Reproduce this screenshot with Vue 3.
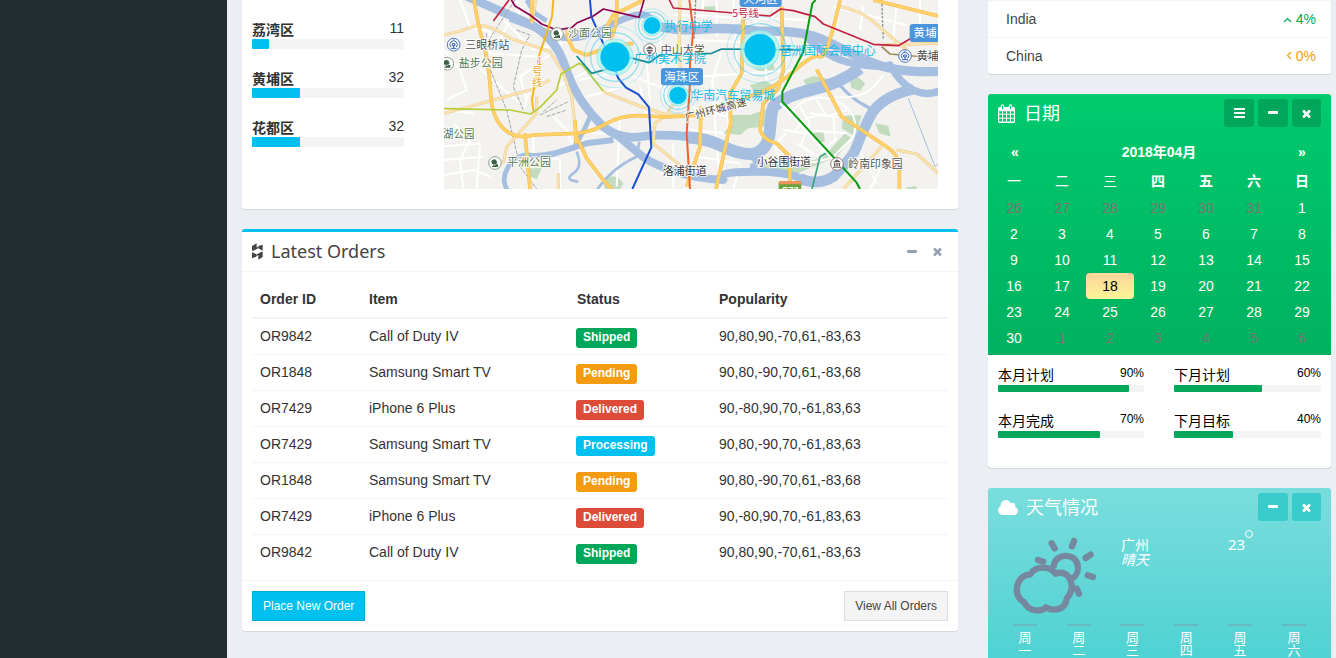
<script setup>
const districts = [
  { name: '荔湾区', value: 11, width: 11 },
  { name: '黄埔区', value: 32, width: 31.6 },
  { name: '花都区', value: 32, width: 31.6 },
]

const orders = [
  { id: 'OR9842', item: 'Call of Duty IV', status: 'Shipped', pop: '90,80,90,-70,61,-83,63' },
  { id: 'OR1848', item: 'Samsung Smart TV', status: 'Pending', pop: '90,80,-90,70,61,-83,68' },
  { id: 'OR7429', item: 'iPhone 6 Plus', status: 'Delivered', pop: '90,-80,90,70,-61,83,63' },
  { id: 'OR7429', item: 'Samsung Smart TV', status: 'Processing', pop: '90,80,-90,70,-61,83,63' },
  { id: 'OR1848', item: 'Samsung Smart TV', status: 'Pending', pop: '90,80,-90,70,61,-83,68' },
  { id: 'OR7429', item: 'iPhone 6 Plus', status: 'Delivered', pop: '90,-80,90,70,-61,83,63' },
  { id: 'OR9842', item: 'Call of Duty IV', status: 'Shipped', pop: '90,80,90,-70,61,-83,63' },
]

const weekdays = ['一', '二', '三', '四', '五', '六', '日']
const days = Array.from({ length: 42 }, (_, i) => {
  if (i < 6) return { n: 26 + i, muted: true }
  if (i > 35) return { n: i - 35, muted: true }
  return { n: i - 5, today: i - 5 === 18 }
})

const plans = [
  { name: '本月计划', pct: 90 },
  { name: '下月计划', pct: 60 },
  { name: '本月完成', pct: 70 },
  { name: '下月目标', pct: 40 },
]

const forecast = ['一', '二', '三', '四', '五', '六']

const times = 'M1490 1322q0 40-28 68l-136 136q-28 28-68 28t-68-28l-294-294-294 294q-28 28-68 28t-68-28l-136-136q-28-28-28-68t28-68l294-294-294-294q-28-28-28-68t28-68l136-136q28-28 68-28t68 28l294 294 294-294q28-28 68-28t68 28l136 136q28 28 28 68t-28 68l-294 294 294 294q28 28 28 68z'

/* Line work of the city map */
const water = [
  { w: 26, d: 'M60 -20 Q150 20 215 48 T300 90 Q350 130 370 185 T400 260 Q430 320 480 370 T600 410 T760 412' },
  { w: 36, d: 'M740 412 Q800 415 850 440 T940 462 Q985 450 990 390 T1000 320 Q1040 285 1120 268 T1260 205' },
  { w: 20, d: 'M210 55 Q290 85 350 108 T520 72 T640 78' },
  { w: 28, d: 'M630 72 Q700 95 780 88 T960 94 Q1090 90 1150 120 T1290 185 T1500 214' },
  { w: 22, d: 'M1100 110 Q1160 175 1240 190 T1350 195 Q1380 250 1420 270 T1500 272' },
  { w: 32, d: 'M1420 268 Q1320 290 1290 350 T1250 440 T1180 530 Q1130 560 1080 535' },
  { w: 24, d: 'M1100 545 Q1060 515 940 515 T850 540 Q760 535 690 510 T590 455 L530 405' },
  { w: 14, d: 'M205 575 Q180 540 205 500 T270 465 T400 445 Q430 400 450 350' },
  { w: 8, d: 'M410 455 Q430 500 400 520 T415 545 M470 570 Q520 500 590 470 L598 425' },
  { w: 18, d: 'M330 465 L440 430 L520 420 M940 470 Q960 500 930 500' },
  { w: 10, d: 'M1190 240 Q1220 290 1290 325' },
  { w: 3, d: 'M1405 295 L1485 500 L1496 490' },
  { w: 14, d: 'M260 0 L285 40 L320 62' },
]
const parks = [
  'M985 325 L930 345 860 345 880 370 850 400 900 405 925 385 975 380 Z',
  'M1090 240 L1120 228 1170 238 1155 260 1110 280 Z',
  'M930 255 L975 243 1010 260 990 280 950 290 Z',
  'M1230 245 L1255 232 1275 250 1262 272 1235 265 Z',
  'M1305 370 L1345 378 1352 410 1318 400 Z',
  'M1210 348 L1265 345 1245 410 1205 385 Z',
  'M930 480 L990 515 1060 525 1190 470 1235 415 1215 400 1150 470 1060 500 Z',
  'M265 505 L305 505 290 538 270 530 Z',
  'M490 545 Q520 510 550 550 L540 570 495 570 Z',
  'M1115 400 L1150 395 1155 425 1125 428 Z',
  'M1400 562 L1430 558 1430 570 1400 570 Z',
  'M790 20 L825 18 830 30 795 35 Z M935 200 L1000 190 1005 210 960 215 Z',
]
const streets =
  'M12 150 L60 210 80 270 20 300 M12 330 L100 340 M0 440 L120 430 110 567 M40 370 L90 420 60 480 70 567 M12 480 L130 470 M12 525 L100 510 150 530 M60 0 L90 80 150 95 150 160 L300 170 M170 140 L210 60 M190 60 L280 150 400 120 M230 0 L240 60 M250 330 L300 180 360 150 M100 190 L240 310 M300 190 L240 230 260 300 M340 350 L380 390 400 440 M350 260 L470 200 M410 300 L580 250 M420 240 L540 215 M280 400 L280 460 360 480 360 567 M400 400 L540 400 M540 350 L530 560 M600 260 L620 340 M580 230 L660 260 700 320 M600 160 L760 170 M620 190 L630 300 M660 110 L680 300 M790 0 L785 80 M830 0 L830 110 M845 150 L815 250 840 300 M700 45 L1100 60 M760 120 L1000 130 M770 230 L1060 210 M880 0 L890 200 M970 110 L980 240 M940 0 L950 100 M1180 20 L1400 75 M1200 0 L1190 80 M1270 20 L1260 90 M1440 0 L1440 90 M1370 10 L1360 120 M750 390 L850 400 M860 320 L870 420 M750 320 L860 350 M770 470 L900 490 M820 300 L840 567 M900 500 L880 567 M700 430 L700 567 M1250 430 L1310 550 M1340 470 L1290 567'
const campus =
  'M1020 310 L1170 470 M1050 340 Q1120 260 1210 315 Q1260 350 1240 410 L1180 470 Q1090 510 1010 460 Q1000 430 1040 400 M1060 400 Q1100 330 1180 350 L1185 420 1140 460 M1080 320 L1110 370 1080 440 M1110 340 L1190 350 M1090 390 L1220 400 M1070 430 L1150 480 M1030 390 L1100 400 M1130 300 L1160 350 1220 330 M1185 290 Q1270 300 1310 250 L1330 225'
const minor = [
  'M12 105 Q60 95 100 80 T210 115 L330 155 370 220 395 290 405 370',
  'M12 340 L80 322 160 300 270 270 330 240',
  'M190 490 L200 440 290 340 M490 275 L590 315 680 345 750 345',
  'M720 0 L718 110 722 270 680 345 645 370 640 430 700 480 750 520',
  'M1210 567 L1325 440 M1370 450 L1430 462 1496 520 M1200 20 Q1260 30 1300 65 T1400 150',
  'M355 520 L355 567 M288 0 L275 70 M290 290 L290 345 M1330 135 L1496 130',
]
const major = [
  'M102 0 Q115 80 130 130 T152 280 Q155 350 190 385 T280 405 L410 400 Q460 395 500 370 Q550 342 620 348 T780 345 Q850 325 910 295',
  'M255 400 L262 480 270 567 M405 360 L408 430 M405 400 L440 475 490 540 515 567',
  'M380 105 L400 150 440 165 Q500 140 580 130 M530 0 Q535 80 510 120 M610 0 L520 45 490 100',
  'M275 0 L275 65 M380 90 L390 130',
  'M910 295 Q1000 270 1060 215 T1140 170 T1200 0 M910 50 L905 220 870 280 872 370 828 567',
  'M1025 20 L1030 210 1015 265 970 310 960 390 Q970 420 1010 430 L1050 470 1050 550',
  'M783 320 L780 440 740 560 M1300 0 L1496 48 M1130 208 L1205 350 1340 440 Q1378 465 1378 500 L1378 567',
]
const metro = [
  { c: '#c4203f', w: 5, d: 'M160 63 L207 0 M688 0 L700 24 L990 48 L1022 27 L1060 32 L1125 50 L1150 72 L1300 133 L1375 137 L1430 105' },
  { c: '#8e0155', w: 5, d: 'M212 -4 L225 18 L270 45 L305 72 L350 90 L395 83 L412 68 L460 48 L490 27 L597 52 L612 0' },
  { c: '#1b4fd0', w: 6, d: 'M450 0 L454 50 L525 210 L535 235 L558 263 L595 283 L627 322 L634 442 L577 567' },
  { c: '#f4b81a', w: 6, d: 'M340 0 L336 50 L298 165 L276 300 L280 332' },
  { c: '#b5cc34', w: 5, d: 'M12 326 L210 330 L272 342 L300 322 L350 270 L363 222 L418 190 L428 196 L490 274' },
  { c: '#158a91', w: 5, d: 'M410 168 L455 220 L520 202 M570 173 L628 188 L660 165 L815 160 L845 147 L940 148 M940 148 L1080 150' },
  { c: '#f06030', w: 6, d: 'M748 0 L760 90 L750 190 L750 250 L740 400 L750 567' },
  { c: '#069b0d', w: 6, d: 'M1127 0 L1117 10 L1090 155 L1027 275 L1027 305 L1170 460 L1250 548 L1260 567' },
  { c: '#3aa580', w: 5, d: 'M1158 460 L1140 470 L1116 567' },
]
const spots = [
  { x: 525, y: 171, r: 43, name: '广州美术学院', tx: 582, ty: 188 },
  { x: 636, y: 77, r: 24, name: '执行中学', tx: 674, ty: 93 },
  { x: 960, y: 149, r: 46, name: '琶洲国际会展中心', tx: 1019, ty: 165 },
  { x: 714, y: 286, r: 25, name: '华南汽车贸易城', tx: 754, ty: 301 },
]
const places = [
  { x: 76, y: 147, t: '三眼桥站', c: '#505050' },
  { x: 56, y: 201, t: '盐步公园', c: '#547554' },
  { x: 384, y: 112, t: '沙面公园', c: '#547554' },
  { x: 9, y: 413, t: '湖公园', c: '#547554', w: 94 },
  { x: 201, y: 498, t: '平洲公园', c: '#547554' },
  { x: 662, y: 162, t: '中山大学', c: '#555' },
  { x: 668, y: 525, t: '洛浦街道', c: '#333' },
  { x: 950, y: 499, t: '小谷围街道', c: '#333', w: 163 },
  { x: 1225, y: 504, t: '岭南印象园', c: '#555', w: 163 },
  { x: 1430, y: 181, t: '黄埔', c: '#444' },
]
const trees = [[351, 102], [22, 191], [165, 489]]
const stations = [[41, 134], [1395, 168]]
</script>

<template>
  <div class="page">
    <aside class="sidebar"></aside>
    <main class="content">
      <div class="left">
        <section class="box map-box">
          <div class="districts">
            <div v-for="d in districts" :key="d.name" class="district">
              <div class="district-head"><b>{{ d.name }}</b><span>{{ d.value }}</span></div>
              <div class="track"><div class="fill aqua" :style="{ width: d.width + '%' }"></div></div>
            </div>
          </div>
          <svg class="map" viewBox="12 0 1482 567" width="494" height="189">
            <rect x="12" width="1482" height="567" fill="#f3f2ef" />
            <path v-for="p in parks" :key="p" :d="p" fill="#c3dcc0" />
            <g fill="none" stroke-linejoin="round">
              <path :d="streets" stroke="#fff" stroke-width="6" />
              <path v-for="r in water" :key="r.d" :d="r.d" :stroke-width="r.w" stroke="#a6bfe0" />
              <path :d="campus" stroke="#fff" stroke-width="6" />
              <path d="M140 100 L135 170 200 330 240 500 290 567 M225 0 L140 130 M230 90 L270 105 245 150 220 260 250 330 M300 345 L385 305 M310 335 L350 300 M320 350 L380 330" stroke="#a6a6a6" stroke-width="3" stroke-dasharray="12 4" />
              <path d="M767 0 L762 120 M1325 0 L1330 120" stroke="#8f8f8f" stroke-width="4" stroke-dasharray="8 4" />
              <path d="M1325 140 L1350 162 1420 168 1496 170" stroke="#9d8c5a" stroke-width="5" />
              <path v-for="m in minor" :key="m" :d="m" stroke="#ebca8a" stroke-width="9" />
              <path v-for="m in minor" :key="'i' + m" :d="m" stroke="#fbe4b2" stroke-width="6" />
              <path v-for="m in major" :key="m" :d="m" stroke="#f3bb4e" stroke-width="11" />
              <path v-for="m in major" :key="'i' + m" :d="m" stroke="#ffd168" stroke-width="8" />
              <path v-for="m in metro" :key="m.d" :d="m.d" :stroke="m.c" :stroke-width="m.w" />
            </g>
            <g v-for="t in trees" :key="t[0]">
              <circle :cx="t[0]" :cy="t[1]" r="19" fill="#fff" stroke="#8d9e8a" stroke-width="3" />
              <path :transform="`translate(${t[0]} ${t[1]})`" d="M-11 -3 a8 8 0 0 1 15 -4 a6 6 0 0 1 -1 10 h-5 v4 h3 v-3 h8 v8 h-18 v-3 h4 v-6 h-4z" fill="#3f6145" />
            </g>
            <g v-for="s in stations" :key="s[0]">
              <circle :cx="s[0]" :cy="s[1]" r="19" fill="#fff" stroke="#4774c4" stroke-width="3" />
              <path :transform="`translate(${s[0]} ${s[1]})`" d="M-8 7 a11 11 0 1 1 16 0 M0 -13 v-3 M-4 -3 h8 v6 h-8z M0 3 v8 M-9 11 h18" fill="none" stroke="#2f62bd" stroke-width="3" />
            </g>
            <g fill="#fff" stroke="#8b7d7d" stroke-width="3">
              <circle cx="629" cy="149" r="18" /><circle cx="1191" cy="492" r="19" />
            </g>
            <path d="M617 146 L629 138 641 146z M620 149 h18 v5 h-18z M624 155 v6 h10 v-6z M1179 487 L1191 478 1203 487z M1182 489 h4 v10 h-4z M1189 489 h4 v10 h-4z M1196 489 h4 v10 h-4z M1179 500 h24 v3 h-24z" fill="#655" />
            <g class="place">
              <text v-for="p in places" :key="p.t" :x="p.x" :y="p.y" :fill="p.c" :textLength="p.w" lengthAdjust="spacingAndGlyphs">{{ p.t }}</text>
            </g>
            <g class="line-name">
              <text x="276" y="226" fill="#eaa61a">号</text>
              <text x="276" y="257" fill="#eaa61a">线</text>
              <text x="290" y="196" fill="#eaa61a">1</text>
              <text x="877" y="52" fill="#c4203f">5号线</text>
              <text transform="translate(738 364) rotate(-15)" fill="#4b3e2a" textLength="190">广州环城高速</text>
            </g>
            <g fill="#4b95dc">
              <rect x="663" y="204" width="126" height="52" rx="9" />
              <rect x="899" y="-30" width="126" height="51" rx="9" />
              <rect x="1409" y="72" width="110" height="54" rx="9" />
            </g>
            <g class="tag">
              <text x="673" y="242">海珠区</text>
              <text x="909" y="9">天河区</text>
              <text x="1420" y="111">黄埔</text>
            </g>
            <rect x="1016" y="543" width="68" height="40" rx="7" fill="#69a33c" />
            <path d="M1016 553 v-4 q0 -6 7 -6 h54 q7 0 7 6 v4z" fill="#f0955b" />
            <text x="1026" y="580" class="shield">S73</text>
            <g v-for="s in spots" :key="s.name">
              <circle :cx="s.x" :cy="s.y" :r="s.r * 1.28" fill="#aef5ec" fill-opacity=".75" />
              <g fill="none" stroke="#30c9ee">
                <circle :cx="s.x" :cy="s.y" :r="s.r * 1.7" stroke-width="4" stroke-opacity=".5" />
                <circle :cx="s.x" :cy="s.y" :r="s.r * 1.27" stroke-width="3" stroke-opacity=".3" />
                <circle :cx="s.x" :cy="s.y" :r="s.r * 2.2 - 2" stroke-width="3" stroke-opacity=".3" />
              </g>
              <circle :cx="s.x" :cy="s.y" :r="s.r + 1" fill="#00c0ef" />
              <text :x="s.tx" :y="s.ty" class="spot">{{ s.name }}</text>
            </g>
          </svg>
        </section>

        <section class="box orders">
          <header class="orders-head">
            <svg width="11" height="17" viewBox="0 0 33 51"><path d="M0 9 L14 1 V14 L0 23z M19 9 L32 5 V23 L19 16z M0 27 L13 34 V41 L0 46z M19 34 L32 26 V42 L19 50z" fill="#444" /><path d="M2 22 L19 13 M13 37 L30 28" stroke="#444" stroke-width="4" /></svg>
            <h3>Latest Orders</h3>
            <svg class="min" width="10" height="4" viewBox="0 0 10 4"><rect width="10" height="3" rx="1" fill="#97a0b3" /></svg>
            <svg width="9" height="9" viewBox="250 260 1290 1270"><path fill="#97a0b3" :d="times" /></svg>
          </header>
          <div class="table">
            <div class="tr th"><span>Order ID</span><span>Item</span><span>Status</span><span>Popularity</span></div>
            <div v-for="(o, i) in orders" :key="i" class="tr">
              <span>{{ o.id }}</span><span>{{ o.item }}</span>
              <span><em :class="['label', o.status.toLowerCase()]">{{ o.status }}</em></span>
              <span>{{ o.pop }}</span>
            </div>
          </div>
          <footer class="orders-foot">
            <button class="btn primary">Place New Order</button>
            <button class="btn">View All Orders</button>
          </footer>
        </section>
      </div>

      <div class="right">
        <section class="box countries">
          <div class="country"><span>India</span><span class="up"><svg width="9" height="6" viewBox="0 0 9 6"><path d="M1 5 L4.500 1.500 L8 5" fill="none" stroke="currentColor" stroke-width="1.200" /></svg> 4%</span></div>
          <div class="country"><span>China</span><span class="flat"><svg width="6" height="9" viewBox="0 0 6 9"><path d="M5 1 L1.500 4.500 L5 8" fill="none" stroke="currentColor" stroke-width="1.200" /></svg> 0%</span></div>
        </section>

        <section class="box calendar">
          <header class="tile-head">
            <svg width="17" height="19" viewBox="0 0 17 19">
              <path d="M1.500 3 H15.500 Q17 3 17 4.500 V17.500 Q17 19 15.500 19 H1.500 Q0 19 0 17.500 V4.500 Q0 3 1.500 3Z" fill="#fff" />
              <path d="M4.500 2 V4.500 M12.500 2 V4.500" stroke="#fff" stroke-width="3.600" stroke-linecap="round" />
              <path d="M4.500 1.500 V5 M12.500 1.500 V5" stroke="#00c76c" stroke-width="1" />
              <path d="M1.200 7.200h2.800v2.600h-2.800z M5 7.200h3v2.600h-3z M9 7.200h3v2.600h-3z M13 7.200h2.800v2.600h-2.800z M1.200 10.800h2.800v3h-2.800z M5 10.800h3v3h-3z M9 10.800h3v3h-3z M13 10.800h2.800v3h-2.800z M1.200 14.800h2.800v2.800h-2.800z M5 14.800h3v2.800h-3z M9 14.800h3v2.800h-3z M13 14.800h2.800v2.800h-2.800z" fill="#00c76c" />
            </svg>
            <h3>日期</h3>
            <div class="tools">
              <i class="tool"><svg width="11" height="10" viewBox="0 0 11 10"><path d="M0 1h11M0 5h11M0 9h11" stroke="#fff" stroke-width="1.900" /></svg></i>
              <i class="tool"><svg width="10" height="4" viewBox="0 0 10 4"><rect width="10" height="3" rx="1" fill="#fff" /></svg></i>
              <i class="tool last"><svg width="9" height="9" viewBox="250 260 1290 1270"><path fill="#fff" :d="times" /></svg></i>
            </div>
          </header>
          <div class="cal">
            <div class="cal-nav"><b>«</b><b>2018年04月</b><b>»</b></div>
            <div class="cal-grid week"><b v-for="(w, i) in weekdays" :key="w" :class="{ thin: i < 3 }">{{ w }}</b></div>
            <div class="cal-grid">
              <span v-for="(d, i) in days" :key="i" :class="{ muted: d.muted, today: d.today }">{{ d.n }}</span>
            </div>
          </div>
          <footer class="plans">
            <div v-for="p in plans" :key="p.name" class="plan">
              <div class="plan-head"><span>{{ p.name }}</span><small>{{ p.pct }}%</small></div>
              <div class="track"><div class="fill green" :style="{ width: p.pct + '%' }"></div></div>
            </div>
          </footer>
        </section>

        <section class="box weather">
          <header class="tile-head">
            <svg width="20" height="15" viewBox="64 256 1920 1280" preserveAspectRatio="none"><path fill="#fff" d="M1984 1152q0 159-112.500 271.500T1600 1536H512q-185 0-316.500-131.500T64 1088q0-132 71-241.500T322 683q-2-28-2-43 0-212 150-362t362-150q158 0 286.500 88T1306 448q70-62 166-62 106 0 181 75t75 181q0 75-41 138 129 30 213 134.500t84 239.500z" transform="matrix(1 0 0 .91 0 138)" /></svg>
            <h3>天气情况</h3>
            <div class="tools">
              <i class="tool"><svg width="10" height="4" viewBox="0 0 10 4"><rect width="10" height="3" rx="1" fill="#fff" /></svg></i>
              <i class="tool last"><svg width="9" height="9" viewBox="250 260 1290 1270"><path fill="#fff" :d="times" /></svg></i>
            </div>
          </header>
          <div class="now">
            <svg width="90" height="84" viewBox="90 162 270 252">
              <g fill="none" stroke="#75889f" stroke-linecap="round" stroke-linejoin="round">
                <path stroke-width="19" d="M151 283 Q162 263 190 263 Q214 263 227 281 Q252 272 267 292 Q283 315 268 345 Q260 353 259 361 Q253 388 221 389 Q207 389 198 382 Q188 393 166 391 Q142 388 132 366 Q104 350 112 316 Q121 285 151 283 Z" />
                <path stroke-width="18" d="M220 264 Q222 230 256 227 Q293 229 294 264 Q294 285 275 297" stroke-linecap="butt" />
                <path stroke-width="19" d="M215 190 L224 205 M282 183 L276 199 M317 234 L332 224 M323 286 L339 291 M174 240 L190 245 M290 326 L297 341" />
              </g>
            </svg>
            <div class="city">广州<br><i>晴天</i></div>
            <div class="temp">23<sup></sup></div>
          </div>
          <div class="forecast">
            <div v-for="f in forecast" :key="f" class="fc"><u></u><span>周</span><span>{{ f }}</span></div>
          </div>
        </section>
      </div>
    </main>
  </div>
</template>

<style>
body { margin: 0; overflow: hidden; }
</style>

<style scoped>
* { box-sizing: border-box; }
.page {
  display: flex; width: 1336px; height: 658px; overflow: hidden;
  font: 14px/20px "Liberation Sans", "Noto Sans CJK SC", sans-serif; color: #333; background: #ebeff4;
}
.sidebar { width: 227px; background: #222d32; flex: none; }
.content { display: flex; align-items: flex-start; gap: 30px; padding-left: 15px; }
.left { width: 716px; }
.right { width: 343px; }
.box { background: #fff; border-radius: 3px; box-shadow: 0 1px 1px rgba(0, 0, 0, .1); margin-bottom: 20px; }
h3 { margin: 0; font-weight: 400; font-size: 18px; line-height: 20px; }
svg { display: block; flex: none; }

.map-box { height: 209px; display: flex; gap: 40px; padding-left: 10px; border-radius: 0 0 3px 3px; }
.districts { width: 152px; padding-top: 10px; }
.district { height: 49px; padding-top: 9px; }
.district-head { height: 20px; display: flex; justify-content: space-between; }
.district-head b { line-height: 22px; }
.district-head span { line-height: 18px; }
.district .track { height: 10px; }
.track { background: #f4f4f4; border-radius: 1px; }
.fill { height: 100%; border-radius: 1px; }
.aqua { background: #00c0ef; }
.green { background: #00a65a; }

.map text { font-family: "Noto Sans CJK SC", sans-serif; }
.place text { font-size: 33px; stroke: #fff; stroke-width: 5px; paint-order: stroke; }
.line-name text { font-size: 31px; stroke: #fff; stroke-width: 5px; paint-order: stroke; }
.tag text { font-size: 35px; fill: #fff; }
.map .spot { font-size: 36px; fill: #14bce8; }
.map .shield { font: bold 28px "Liberation Sans", sans-serif; fill: #fff; }

.orders { border-top: 3px solid #00c0ef; height: 402px; }
.orders-head { height: 40px; border-bottom: 1px solid #f4f4f4; display: flex; align-items: center; padding: 0 16px 0 10px; color: #444; }
.orders-head h3 { margin: -2px auto 0 8px; font-family: "Noto Sans", sans-serif; font-size: 18px; }
.orders-head .min { margin-right: 16px; }
.table { padding: 9px 10px 10px; }
.tr { display: grid; grid-template-columns: 109px 207px 143px 1fr; height: 36px; border-top: 1px solid #f4f4f4; padding-top: 7px; }
.tr > span { padding-left: 8px; }
.th { height: 38px; border: 0; border-bottom: 2px solid #f4f4f4; font-weight: 700; padding-top: 8px; }
.th > span:nth-child(3) { padding-left: 9px; }
.th + .tr { border-top: 0; height: 35px; }
.label { display: inline-block; height: 20px; margin-top: 2px; padding: 0 7px; border-radius: 3px; color: #fff; font: bold 12px/18px "Liberation Sans", sans-serif; vertical-align: top; }
.shipped { background: #00a65a; }
.pending { background: #f39c12; }
.delivered { background: #dd4b39; }
.processing { background: #00c0ef; }
.orders-foot { display: flex; justify-content: space-between; align-items: flex-start; border-top: 1px solid #f4f4f4; padding: 10px; }
.btn { height: 30px; padding: 0 10px; font: 12px/18px "Liberation Sans", sans-serif; border: 1px solid #ddd; background: #f4f4f4; color: #444; border-radius: 0; }
.primary { background: #00c0ef; border-color: #00acd6; color: #fff; }

.countries { height: 74px; border-radius: 0 0 3px 3px; }
.country { height: 37px; border-top: 1px solid #f4f4f4; display: flex; justify-content: space-between; padding: 8px 15px 0 18px; color: #444; }
.country svg { display: inline-block; vertical-align: 1px; }
.up { color: #00a65a; }
.flat { color: #f39c12; }

.calendar { height: 374px; background: linear-gradient(#00ca6d, #00a65a); display: flex; flex-direction: column; }
.tile-head { display: flex; align-items: center; height: 39px; padding: 0 10px; color: #fff; flex: none; }
.tile-head h3 { margin-left: 9px; }
.tools { display: flex; gap: 4px; margin-left: auto; align-self: flex-start; margin-top: 5px; }
.tool { width: 30px; height: 28px; border-radius: 3px; background: #00a65a; display: flex; align-items: center; justify-content: center; }
.last { width: 29px; }
.cal { padding: 4px 5px 0 2px; height: 222px; flex: none; color: #fff; text-align: center; }
.cal-nav { display: grid; grid-template-columns: 50px 1fr 48px; height: 31px; line-height: 30px; }
.cal-grid { display: grid; grid-template-columns: repeat(7, 48px); grid-auto-rows: 26px; line-height: 26px; }
.week { height: 27px; font-size: 14px; line-height: 27px; }
.thin { font-weight: 400; }
.muted { color: #777; }
.today { background: linear-gradient(#fdd49a, #fdf59a); color: #000; border-radius: 4px; }
.plans { background: #fff; border-radius: 0 0 3px 3px; flex: 1; display: grid; grid-template-columns: 146px 147px; column-gap: 30px; grid-auto-rows: 46px; align-content: start; padding: 10px; color: #000; }
.plan-head { height: 20px; display: flex; justify-content: space-between; }
.plan-head span { line-height: 21px; }
.plan-head small { font-size: 12px; line-height: 17px; }
.plan .track { height: 7px; }

.weather { height: 262px; background: linear-gradient(#7adddd, #39cccc); color: #fff; }
.weather .tool { background: #39cccc; }
.weather h3 { margin-left: 8px; }
.now { display: flex; height: 97px; padding: 7px 0 0 22px; }
.city { font: 14px/15px "Noto Sans CJK SC", sans-serif; padding: 3px 0 0 21px; width: 128px; }
.temp { font: 15px/20px "Noto Sans", "Open Sans", sans-serif; display: flex; }
.temp sup { width: 8px; height: 8px; border: 1px solid #fff; border-radius: 50%; margin: -4px 0 0 0; }
.forecast { display: grid; grid-template-columns: repeat(6, 53.800px); padding-left: 10px; }
.fc { display: flex; flex-direction: column; align-items: center; font: 13px/13px "Noto Sans CJK SC", sans-serif; }
.fc u { width: 24px; height: 2px; background: #67b9c1; margin-bottom: 4px; }
</style>
